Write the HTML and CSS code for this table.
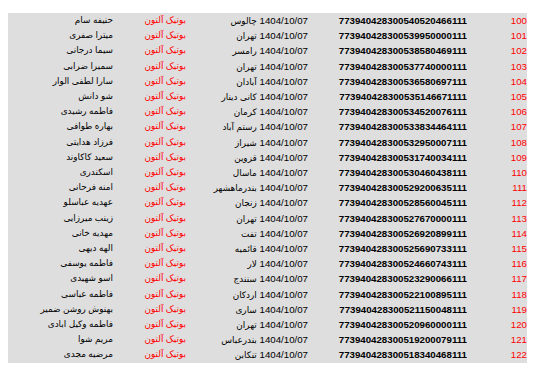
FILE: index.html
```html
<!DOCTYPE html>
<html lang="fa" dir="rtl">
<head>
<meta charset="utf-8">
<link rel="stylesheet" href="styles.css">
</head>
<body>
<div class="list">
  <div class="row"><span class="idx">100</span><span class="code">773940428300540520466111</span><span class="date">1404/10/07 <span class="fa">چالوس</span></span><span class="shop fa">بوتیک آلتون</span><span class="name fa">حنیفه سام</span></div>
  <div class="row"><span class="idx">101</span><span class="code">773940428300539950000111</span><span class="date">1404/10/07 <span class="fa">تهران</span></span><span class="shop fa">بوتیک آلتون</span><span class="name fa">میترا صفری</span></div>
  <div class="row"><span class="idx">102</span><span class="code">773940428300538580469111</span><span class="date">1404/10/07 <span class="fa">رامسر</span></span><span class="shop fa">بوتیک آلتون</span><span class="name fa">سیما درجانی</span></div>
  <div class="row"><span class="idx">103</span><span class="code">773940428300537740000111</span><span class="date">1404/10/07 <span class="fa">تهران</span></span><span class="shop fa">بوتیک آلتون</span><span class="name fa">سمیرا ضرابی</span></div>
  <div class="row"><span class="idx">104</span><span class="code">773940428300536580697111</span><span class="date">1404/10/07 <span class="fa">آبادان</span></span><span class="shop fa">بوتیک آلتون</span><span class="name fa">سارا لطفی الوار</span></div>
  <div class="row"><span class="idx">105</span><span class="code">773940428300535146671111</span><span class="date">1404/10/07 <span class="fa">کانی دینار</span></span><span class="shop fa">بوتیک آلتون</span><span class="name fa">شو دانش</span></div>
  <div class="row"><span class="idx">106</span><span class="code">773940428300534520076111</span><span class="date">1404/10/07 <span class="fa">کرمان</span></span><span class="shop fa">بوتیک آلتون</span><span class="name fa">فاطمه رشیدی</span></div>
  <div class="row"><span class="idx">107</span><span class="code">773940428300533834464111</span><span class="date">1404/10/07 <span class="fa">رستم آباد</span></span><span class="shop fa">بوتیک آلتون</span><span class="name fa">بهاره طوافی</span></div>
  <div class="row"><span class="idx">108</span><span class="code">773940428300532950007111</span><span class="date">1404/10/07 <span class="fa">شیراز</span></span><span class="shop fa">بوتیک آلتون</span><span class="name fa">فرزاد هدایتی</span></div>
  <div class="row"><span class="idx">109</span><span class="code">773940428300531740034111</span><span class="date">1404/10/07 <span class="fa">قزوین</span></span><span class="shop fa">بوتیک آلتون</span><span class="name fa">سعید کاکاوند</span></div>
  <div class="row"><span class="idx">110</span><span class="code">773940428300530460438111</span><span class="date">1404/10/07 <span class="fa">ماسال</span></span><span class="shop fa">بوتیک آلتون</span><span class="name fa">اسکندری</span></div>
  <div class="row"><span class="idx">111</span><span class="code">773940428300529200635111</span><span class="date">1404/10/07 <span class="fa">بندرماهشهر</span></span><span class="shop fa">بوتیک آلتون</span><span class="name fa">امنه فرحانی</span></div>
  <div class="row"><span class="idx">112</span><span class="code">773940428300528560045111</span><span class="date">1404/10/07 <span class="fa">زنجان</span></span><span class="shop fa">بوتیک آلتون</span><span class="name fa">عهدیه عباسلو</span></div>
  <div class="row"><span class="idx">113</span><span class="code">773940428300527670000111</span><span class="date">1404/10/07 <span class="fa">تهران</span></span><span class="shop fa">بوتیک آلتون</span><span class="name fa">زینب میرزایی</span></div>
  <div class="row"><span class="idx">114</span><span class="code">773940428300526920899111</span><span class="date">1404/10/07 <span class="fa">تفت</span></span><span class="shop fa">بوتیک آلتون</span><span class="name fa">مهدیه خانی</span></div>
  <div class="row"><span class="idx">115</span><span class="code">773940428300525690733111</span><span class="date">1404/10/07 <span class="fa">قائمیه</span></span><span class="shop fa">بوتیک آلتون</span><span class="name fa">الهه دیهی</span></div>
  <div class="row"><span class="idx">116</span><span class="code">773940428300524660743111</span><span class="date">1404/10/07 <span class="fa">لار</span></span><span class="shop fa">بوتیک آلتون</span><span class="name fa">فاطمه یوسفی</span></div>
  <div class="row"><span class="idx">117</span><span class="code">773940428300523290066111</span><span class="date">1404/10/07 <span class="fa">سنندج</span></span><span class="shop fa">بوتیک آلتون</span><span class="name fa">اسو شهیدی</span></div>
  <div class="row"><span class="idx">118</span><span class="code">773940428300522100895111</span><span class="date">1404/10/07 <span class="fa">اردکان</span></span><span class="shop fa">بوتیک آلتون</span><span class="name fa">فاطمه عباسی</span></div>
  <div class="row"><span class="idx">119</span><span class="code">773940428300521150048111</span><span class="date">1404/10/07 <span class="fa">ساری</span></span><span class="shop fa">بوتیک آلتون</span><span class="name fa">بهنوش روشن ضمیر</span></div>
  <div class="row"><span class="idx">120</span><span class="code">773940428300520960000111</span><span class="date">1404/10/07 <span class="fa">تهران</span></span><span class="shop fa">بوتیک آلتون</span><span class="name fa">فاطمه وکیل ابادی</span></div>
  <div class="row"><span class="idx">121</span><span class="code">773940428300519200079111</span><span class="date">1404/10/07 <span class="fa">بندرعباس</span></span><span class="shop fa">بوتیک آلتون</span><span class="name fa">مریم شوا</span></div>
  <div class="row"><span class="idx">122</span><span class="code">773940428300518340468111</span><span class="date">1404/10/07 <span class="fa">تنکابن</span></span><span class="shop fa">بوتیک آلتون</span><span class="name fa">مرضیه مجدی</span></div>
</div>
</body>
</html>
```

FILE: styles.css
```css
html, body {
  margin: 0;
  padding: 0;
  background: #ffffff;
}

body {
  padding: 13px 16px 0 8px;
  font-family: "Liberation Sans", "DejaVu Sans", Arial, sans-serif;
  font-size: 9.7px;
  color: #000000;
}

.list {
  width: 519px;
  background: #dedede;
  display: flex;
  flex-direction: column;
}

.row {
  display: grid;
  grid-template-columns: 60px 159px 122px 73px 105px;
  height: 15.217px;
  line-height: 15.217px;
  white-space: nowrap;
}

.row > span {
  text-align: right;
  overflow: hidden;
}

.fa {
  font-size: 8.9px;
}

.idx {
  color: #ff0000;
}

.code {
  font-weight: bold;
}

.shop {
  color: #ff0000;
}
```
